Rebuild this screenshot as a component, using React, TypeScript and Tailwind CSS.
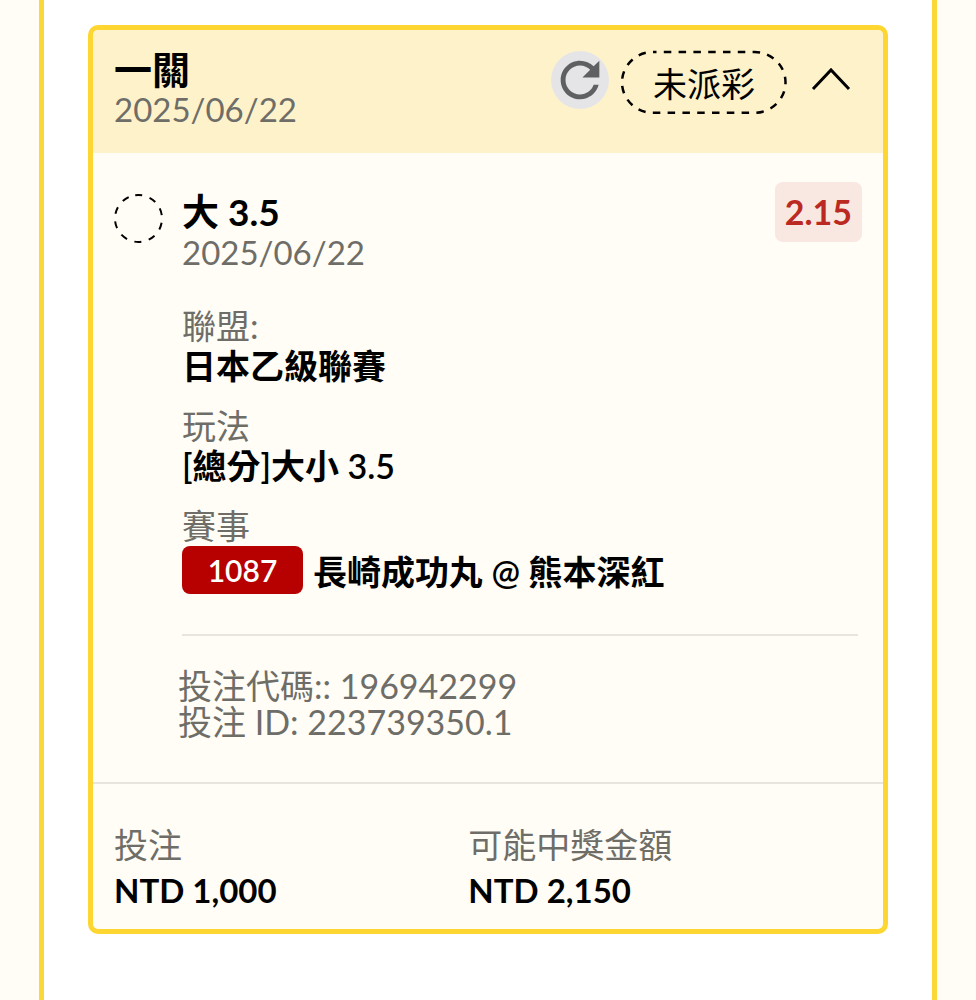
import { useState } from "react";

const DETAILS = [
  { label: "聯盟:", value: "日本乙級聯賽" },
  { label: "玩法", value: "[總分]大小 3.5" },
];

const TOTALS = [
  { label: "投注", value: "NTD 1,000" },
  { label: "可能中獎金額", value: "NTD 2,150" },
];

function RefreshIcon() {
  return (
    <svg viewBox="0 0 24 24" className="size-[58px]" aria-hidden="true">
      <path
        d="M17.65 6.35C16.2 4.9 14.21 4 12 4c-4.42 0-7.99 3.58-7.99 8s3.57 8 7.99 8c3.73 0 6.84-2.55 7.73-6h-2.08c-.82 2.33-3.04 4-5.65 4-3.31 0-6-2.69-6-6s2.69-6 6-6c1.66 0 3.14.69 4.22 1.78L13 11h7V4l-2.35 2.35z"
        fill="#5f6062"
      />
    </svg>
  );
}

function StatusPill({ text }: { text: string }) {
  return (
    <div className="relative flex h-16 items-center px-8 pt-[2px]">
      <svg className="absolute inset-0 size-full overflow-visible" aria-hidden="true">
        <rect
          x="1"
          y="1"
          width="98.5%"
          height="95%"
          rx="31"
          fill="none"
          stroke="#000"
          strokeWidth="2.5"
          strokeDasharray="7.5 7.3"
          strokeDashoffset="4"
        />
      </svg>
      <span className="text-[34px] leading-10">{text}</span>
    </div>
  );
}

function BetSelection() {
  return (
    <section className="flex items-start px-[21px] pt-[29px] pb-[42px]">
      <svg viewBox="0 0 50 50" className="mt-3 size-[50px] shrink-0" aria-hidden="true">
        <circle
          cx="24.5"
          cy="24.5"
          r="23.5"
          fill="none"
          stroke="#000"
          strokeWidth="2"
          strokeDasharray="7 7.76"
          transform="rotate(-98 24.5 24.5)"
        />
      </svg>

      <div className="ml-[18px] min-w-0 flex-1">
        <div className="flex items-start justify-between">
          <div className="pt-[10px]">
            <h3 className="text-[37px] leading-10 font-bold">大 3.5</h3>
            <p className="text-[33px] leading-10 text-[#6e6d68]">2025/06/22</p>
          </div>
          <span className="rounded-lg bg-[#f9e7e1] p-[10px] text-[34px] leading-10 font-bold text-[#bb2a22]">
            2.15
          </span>
        </div>

        <dl className="mt-[34px] text-[34px] leading-10">
          {DETAILS.map((item) => (
            <div key={item.label} className="mb-5">
              <dt className="text-[#6e6d68]">{item.label}</dt>
              <dd className="font-semibold">{item.value}</dd>
            </div>
          ))}
          <div>
            <dt className="text-[#6e6d68]">賽事</dt>
            <dd className="flex items-end gap-[10px] font-semibold">
              <span className="w-[121px] rounded-lg bg-[#b70000] py-1 text-center text-[30px] text-white">
                1087
              </span>
              <span className="pb-[2px]">長崎成功丸 @ 熊本深紅</span>
            </dd>
          </div>
        </dl>

        <hr className="mt-10 mr-1 border-t-2 border-[#e8e5df]" />

        <div className="mt-8 -ml-1 text-[34px] leading-9 text-[#6e6d68]">
          <p>投注代碼:: 196942299</p>
          <p>投注 ID: 223739350.1</p>
        </div>
      </div>
    </section>
  );
}

export default function App() {
  const [isExpanded, setIsExpanded] = useState(true);

  return (
    <div className="min-h-screen bg-[#fffdf5] px-[39px] font-[Lato,'Noto_Sans_CJK_TC',sans-serif] text-black">
      <main className="min-h-screen border-x-[5px] border-[#fbd837] bg-white px-11 py-[25px]">
        <article className="overflow-hidden rounded-[10px] border-[5px] border-[#fdd631] bg-[#fffdf5]">
          <header className="flex items-start justify-between bg-[#fef2cb] pt-[19px] pr-8 pb-6 pl-[21px]">
            <div>
              <h2 className="text-[38px] leading-10 font-bold">一關</h2>
              <p className="text-[33px] leading-10 text-[#6e6d68]">2025/06/22</p>
            </div>
            <div className="flex items-start pt-[2px]">
              <button type="button" aria-label="重新整理" className="mr-3 rounded-full bg-[#e5e5e8]">
                <RefreshIcon />
              </button>
              <StatusPill text="未派彩" />
              <button
                type="button"
                aria-label="展開或收合"
                aria-expanded={isExpanded}
                onClick={() => setIsExpanded(!isExpanded)}
                className="mt-3 ml-6"
              >
                <svg viewBox="0 0 40 32" className="h-8 w-10" aria-hidden="true">
                  <path d="M2 26 20 7 38 26" fill="none" stroke="#000" strokeWidth="3" />
                </svg>
              </button>
            </div>
          </header>

          {isExpanded && <BetSelection />}

          <dl className="grid grid-cols-[9fr_10fr] border-t-2 border-[#e8e5df] px-[21px] pt-[41px] pb-[19px]">
            {TOTALS.map((item) => (
              <div key={item.label}>
                <dt className="text-[34px] leading-10 text-[#6e6d68]">{item.label}</dt>
                <dd className="mt-[5px] text-[33px] leading-10 font-bold">{item.value}</dd>
              </div>
            ))}
          </dl>
        </article>
      </main>
    </div>
  );
}
